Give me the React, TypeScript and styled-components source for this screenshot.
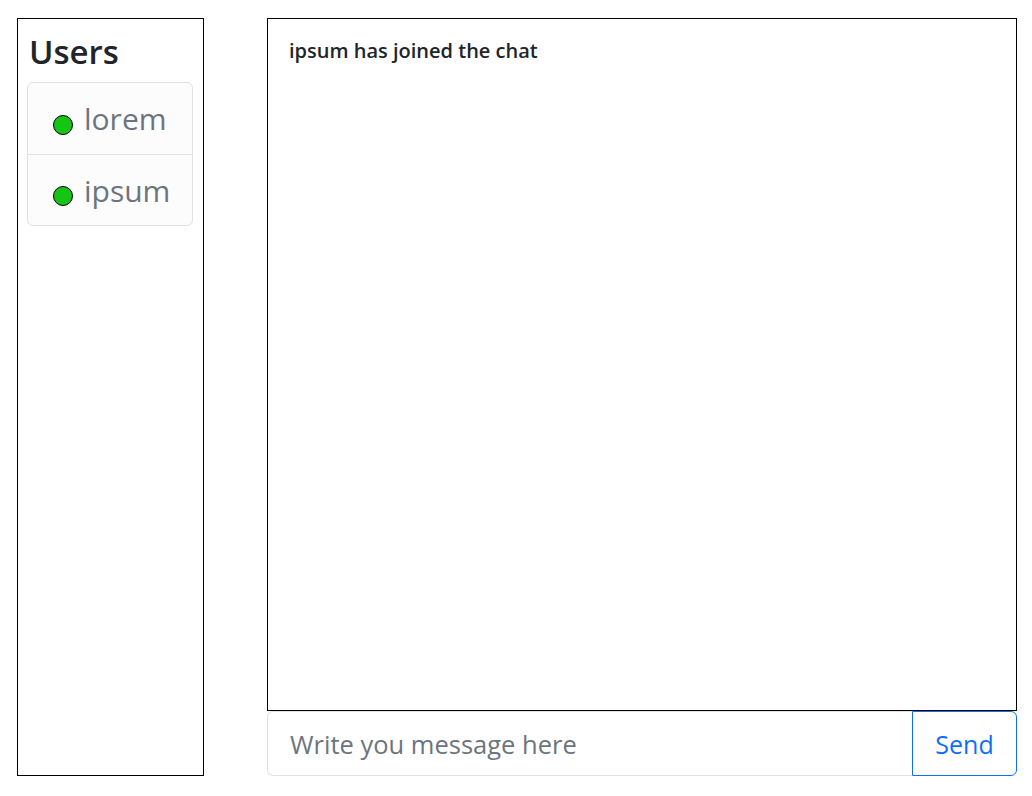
import React from "react";
import styled, { createGlobalStyle } from "styled-components";

const GlobalStyle = createGlobalStyle`
  html, body { margin: 0; padding: 0; background: #fff; }
  body {
    font-family: "Open Sans", "Noto Sans", "Liberation Sans", sans-serif;
    color: #212529;
  }
  * { box-sizing: border-box; }
`;

const Page = styled.div`
  display: flex;
  height: 796px;
  padding: 18px 15px 20px 17px;
  gap: 63px;
`;

const Sidebar = styled.aside`
  width: 187px;
  flex: none;
  border: 1px solid #000;
  padding: 10px 10px 10px 9px;
`;

const Heading = styled.h1`
  margin: 0 0 8px 0;
  font-size: 33px;
  font-weight: 600;
  line-height: 45px;
  color: #212529;
  padding-left: 2px;
`;

const UserList = styled.ul`
  list-style: none;
  margin: 0;
  padding: 0;
  border: 1px solid #dee2e6;
  border-radius: 6px;
  background: #fcfcfc;
  overflow: hidden;
`;

const UserItem = styled.li`
  display: flex;
  align-items: center;
  gap: 11px;
  height: 71px;
  padding: 0 0 0 25px;
  font-size: 30px;
  color: #6c757d;
  & + & { border-top: 1px solid #dee2e6; }
`;

const Dot = styled.span<{ $online: boolean }>`
  width: 20px;
  height: 20px;
  border-radius: 50%;
  border: 1px solid #000;
  background: ${(p) => (p.$online ? "#15c415" : "#aaa")};
  flex: none;
  margin-top: 12px;
`;

const Main = styled.main`
  flex: 1;
  display: flex;
  flex-direction: column;
  min-width: 0;
`;

const ChatBox = styled.section`
  flex: 1;
  border: 1px solid #000;
  padding: 20px 21px;
`;

const Message = styled.p`
  margin: 0;
  font-size: 20px;
  font-weight: 600;
  line-height: 24px;
  color: #212529;
`;

const InputGroup = styled.form`
  display: flex;
  height: 65px;
  flex: none;
`;

const MessageInput = styled.input`
  flex: 1;
  min-width: 0;
  border: 1px solid #dee2e6;
  border-right: none;
  border-radius: 6px 0 0 6px;
  padding: 0 22px;
  font-family: inherit;
  font-size: 25.5px;
  color: #212529;
  outline: none;
  &::placeholder { color: #6c757d; }
`;

const SendButton = styled.button`
  width: 105px;
  flex: none;
  border: 1px solid #0d6efd;
  border-radius: 0 6px 6px 0;
  background: #fff;
  color: #0d6efd;
  font-family: inherit;
  font-size: 25px;
  cursor: pointer;
`;

const users = [
  { name: "lorem", online: true },
  { name: "ipsum", online: true },
];

export default function App() {
  return (
    <>
      <GlobalStyle />
      <Page>
        <Sidebar>
          <Heading>Users</Heading>
          <UserList>
            {users.map((u) => (
              <UserItem key={u.name}>
                <Dot $online={u.online} />
                {u.name}
              </UserItem>
            ))}
          </UserList>
        </Sidebar>
        <Main>
          <ChatBox>
            <Message>ipsum has joined the chat</Message>
          </ChatBox>
          <InputGroup onSubmit={(e) => e.preventDefault()}>
            <MessageInput placeholder="Write you message here" />
            <SendButton type="submit">Send</SendButton>
          </InputGroup>
        </Main>
      </Page>
    </>
  );
}
